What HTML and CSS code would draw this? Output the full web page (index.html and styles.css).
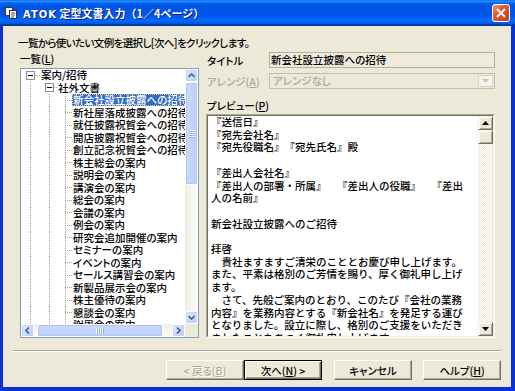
FILE: index.html
```html
<!DOCTYPE html>
<html lang="ja">
<head>
  <meta charset="UTF-8">
  <title>ATOK 定型文書入力</title>
  <link rel="stylesheet" href="styles.css">
</head>
<body>
  <div class="window">
    <div class="titlebar">
      <svg class="app-icon" width="12" height="12" viewBox="0 0 12 12">
        <rect x="0.5" y="0.5" width="7" height="8" fill="#fff" stroke="#333"/>
        <rect x="4.5" y="3.5" width="7" height="8" fill="#fff" stroke="#333"/>
        <path d="M6 6h4M6 8h4M6 10h3" stroke="#555" stroke-width="1"/>
      </svg>
      <span class="caption"><span class="latin">ATOK</span> 定型文書入力（1／4ページ）</span>
      <span class="close-btn">
        <svg width="10" height="10" viewBox="0 0 10 10"><path d="M1 1L9 9M9 1L1 9" stroke="#fff" stroke-width="2"/></svg>
      </span>
    </div>

    <div class="client">
      <p class="intro">一覧から使いたい文例を選択し[次へ]をクリックします。</p>

      <div class="main">
        <!-- left: template tree -->
        <div class="list-col">
          <div class="label list-label">一覧(<u>L</u>)</div>
          <div class="tree">
            <div class="tree-body">
              <div class="node node-root"><span class="exp"></span><span class="dash"></span><span class="name">案内/招待</span></div>
              <div class="node node-group"><span class="exp"></span><span class="dash short"></span><span class="name">社外文書</span></div>
              <div class="node leaf"><span class="tick"></span><span class="name selected">新会社設立披露への招待</span></div>
              <div class="node leaf"><span class="tick"></span><span class="name">新社屋落成披露への招待</span></div>
              <div class="node leaf"><span class="tick"></span><span class="name">就任披露祝賀会への招待</span></div>
              <div class="node leaf"><span class="tick"></span><span class="name">開店披露祝賀会への招待</span></div>
              <div class="node leaf"><span class="tick"></span><span class="name">創立記念祝賀会への招待</span></div>
              <div class="node leaf"><span class="tick"></span><span class="name">株主総会の案内</span></div>
              <div class="node leaf"><span class="tick"></span><span class="name">説明会の案内</span></div>
              <div class="node leaf"><span class="tick"></span><span class="name">講演会の案内</span></div>
              <div class="node leaf"><span class="tick"></span><span class="name">総会の案内</span></div>
              <div class="node leaf"><span class="tick"></span><span class="name">会議の案内</span></div>
              <div class="node leaf"><span class="tick"></span><span class="name">例会の案内</span></div>
              <div class="node leaf"><span class="tick"></span><span class="name">研究会追加開催の案内</span></div>
              <div class="node leaf"><span class="tick"></span><span class="name">セミナーの案内</span></div>
              <div class="node leaf"><span class="tick"></span><span class="name">イベントの案内</span></div>
              <div class="node leaf"><span class="tick"></span><span class="name">セールス講習会の案内</span></div>
              <div class="node leaf"><span class="tick"></span><span class="name">新製品展示会の案内</span></div>
              <div class="node leaf"><span class="tick"></span><span class="name">株主優待の案内</span></div>
              <div class="node leaf"><span class="tick"></span><span class="name">懇談会の案内</span></div>
              <div class="node leaf"><span class="tick"></span><span class="name">謝恩会の案内</span></div>
            </div>

            <div class="vscroll">
              <span class="sb-btn"><svg width="7" height="5" viewBox="0 0 7 5"><path d="M0.5 4L3.5 1L6.5 4" fill="none" stroke="#4D6185" stroke-width="1.6"/></svg></span>
              <span class="sb-thumb v-thumb">
                <svg width="6" height="8" viewBox="0 0 6 8"><path d="M0 0.5h6M0 2.5h6M0 4.5h6M0 6.5h6" stroke="#fff"/><path d="M0 1.5h6M0 3.5h6M0 5.5h6M0 7.5h6" stroke="#8CB0F8"/></svg>
              </span>
              <span class="sb-space"></span>
              <span class="sb-btn"><svg width="7" height="5" viewBox="0 0 7 5"><path d="M0.5 1L3.5 4L6.5 1" fill="none" stroke="#4D6185" stroke-width="1.6"/></svg></span>
            </div>
            <div class="hscroll">
              <span class="sb-btn"><svg width="5" height="7" viewBox="0 0 5 7"><path d="M4 0.5L1 3.5L4 6.5" fill="none" stroke="#4D6185" stroke-width="1.6"/></svg></span>
              <span class="sb-thumb h-thumb">
                <svg width="8" height="6" viewBox="0 0 8 6"><path d="M0.5 0v6M2.5 0v6M4.5 0v6M6.5 0v6" stroke="#fff"/><path d="M1.5 0v6M3.5 0v6M5.5 0v6M7.5 0v6" stroke="#8CB0F8"/></svg>
              </span>
              <span class="sb-space"></span>
              <span class="sb-btn"><svg width="5" height="7" viewBox="0 0 5 7"><path d="M1 0.5L4 3.5L1 6.5" fill="none" stroke="#4D6185" stroke-width="1.6"/></svg></span>
            </div>
            <div class="corner"></div>
          </div>
        </div>

        <!-- right: title, arrange, preview -->
        <div class="detail-col">
          <div class="field-row">
            <span class="label">タイトル</span>
            <div class="field">新会社設立披露への招待</div>
          </div>
          <div class="field-row combo-row">
            <span class="label disabled">アレンジ(<u>A</u>)</span>
            <div class="combo">
              <span class="combo-text">アレンジなし</span>
              <span class="combo-btn"><svg width="7" height="4" viewBox="0 0 7 4"><path d="M0 0h7L3.5 4z" fill="#C9C7BA"/></svg></span>
            </div>
          </div>
          <div class="label preview-label">プレビュー(<u>P</u>)</div>
          <div class="preview">
            <div class="preview-inner">
              <div class="preview-text">『送信日』
『宛先会社名』
『宛先役職名』　『宛先氏名』殿

『差出人会社名』
『差出人の部署・所属』　　『差出人の役職』　　『差出
人の名前』

新会社設立披露へのご招待

拝啓
　貴社ますますご清栄のこととお慶び申し上げます。
また、平素は格別のご芳情を賜り、厚く御礼申し上げ
ます。
　さて、先般ご案内のとおり、このたび『会社の業務
内容』を業務内容とする『新会社名』を発足する運び
となりました。設立に際し、格別のご支援をいただき
ましたことをあつく御礼申し上げます。</div>
              <div class="cscroll">
                <span class="c-btn"><svg width="7" height="4" viewBox="0 0 7 4"><path d="M3.5 0L7 4H0z" fill="#000"/></svg></span>
                <span class="c-btn c-thumb"></span>
                <span class="c-track"></span>
                <span class="c-btn"><svg width="7" height="4" viewBox="0 0 7 4"><path d="M0 0h7L3.5 4z" fill="#000"/></svg></span>
              </div>
            </div>
          </div>
        </div>
      </div>

      <div class="separator"></div>

      <div class="buttons">
        <button class="btn btn-back" disabled>&lt; 戻る(<u>B</u>)</button>
        <button class="btn btn-next">次へ(<u>N</u>) &gt;</button>
        <button class="btn btn-cancel">キャンセル</button>
        <button class="btn btn-help">ヘルプ(<u>H</u>)</button>
      </div>
    </div>
  </div>
</body>
</html>
```

FILE: styles.css
```css
* {
  box-sizing: border-box;
}
html, body {
  margin: 0;
  background: #fff;
}
body {
  width: 515px;
  height: 391px;
  overflow: hidden;
  font-family: "Noto Sans CJK JP", sans-serif;
  font-size: 10.5px;
  font-weight: 500;
  color: #000;
  font-feature-settings: "palt";
}
u {
  text-underline-offset: 1px;
}

/* window frame */
.window {
  width: 515px;
  height: 391px;
  display: flex;
  flex-direction: column;
  background: #0831D9;
}
.titlebar {
  height: 26px;
  flex: none;
  display: flex;
  align-items: center;
  padding-left: 5px;
  background: linear-gradient(to bottom, #0058EE 0%, #3593FF 4%, #288EFF 6%, #127DFF 8%, #036FFC 10%, #0262EE 14%, #0057E5 20%, #0054E3 24%, #0055EB 56%, #005BF5 66%, #026AFE 76%, #0062EF 86%, #0052D6 92%, #0040AB 94%, #003092 100%);
}
.app-icon {
  flex: none;
  margin-right: 6px;
}
.caption {
  color: #fff;
  font-weight: bold;
  font-size: 11px;
  font-feature-settings: normal;
  text-shadow: 1px 1px #0A1883;
  white-space: nowrap;
}
.caption .latin {
  font-family: "DejaVu Sans", sans-serif;
  font-size: 10px;
  letter-spacing: 1px;
}
.close-btn {
  margin-left: auto;
  margin-right: 5px;
  width: 18px;
  height: 18px;
  border: 1px solid #fff;
  border-radius: 3px;
  background: linear-gradient(135deg, #F0957A 0%, #E2603A 35%, #D44A22 70%, #C13B14 100%);
  display: flex;
  align-items: center;
  justify-content: center;
}

.client {
  flex: 1;
  margin: 0 4px 4px 3px;
  background: #ECE9D8;
  padding: 10px 10px 0 10px;
}
.intro {
  margin: 0 0 3px 5px;
  line-height: 13px;
  letter-spacing: -0.6px;
  white-space: nowrap;
}

.main {
  margin: 0 6px;
  display: grid;
  grid-template-columns: 180px 1fr;
  column-gap: 7px;
  height: 286px;
}

.label {
  line-height: 13px;
  white-space: nowrap;
}
.label.disabled {
  color: #ACA899;
}
.list-label {
  margin: 0 0 3px 1px;
}

/* tree view */
.tree {
  margin-left: 1px;
  height: 270px;
  border: 1px solid #7F9DB9;
  background: #fff;
  display: grid;
  grid-template-columns: 1fr 13px;
  grid-template-rows: 1fr 13px;
}
.tree-body {
  overflow: hidden;
  white-space: nowrap;
}
.node {
  display: flex;
  align-items: center;
  height: 12.5px;
}
.node-root {
  padding-left: 5px;
}
.node-group {
  padding-left: 24px;
  background: linear-gradient(#A0A0A0 50%, transparent 0) 9px 0 / 1px 2px repeat-y;
}
.leaf {
  padding-left: 44px;
  background:
    linear-gradient(#A0A0A0 50%, transparent 0) 9px 0 / 1px 2px repeat-y,
    linear-gradient(#A0A0A0 50%, transparent 0) 28px 0 / 1px 2px repeat-y,
    linear-gradient(#A0A0A0 50%, transparent 0) 44px 0 / 1px 2px repeat-y;
}
.exp {
  flex: none;
  width: 9px;
  height: 9px;
  border: 1px solid #8E8F8F;
  background: linear-gradient(#000, #000) center / 5px 1px no-repeat, #fff;
}
.dash {
  flex: none;
  width: 5px;
  border-top: 1px dotted #A0A0A0;
}
.dash.short {
  width: 3px;
}
.tick {
  flex: none;
  width: 7px;
  border-top: 1px dotted #A0A0A0;
}
.name {
  padding: 0 1px;
  height: 12px;
  line-height: 12px;
}
.name.selected {
  background: #316AC5;
  color: #fff;
  outline: 1px dotted #E8C48A;
  outline-offset: -1px;
}

/* XP themed scrollbars of the tree */
.vscroll {
  display: flex;
  flex-direction: column;
  background: linear-gradient(to right, #EEEDE5, #FDFDFA);
}
.hscroll {
  display: flex;
  background: linear-gradient(to bottom, #EEEDE5, #FDFDFA);
}
.sb-btn {
  flex: none;
  width: 13px;
  height: 13px;
  border: 1px solid #fff;
  border-radius: 2px;
  background: linear-gradient(135deg, #E3EBFE, #B7CBF7);
  box-shadow: inset 0 0 0 1px #C3D3FD;
  display: flex;
  align-items: center;
  justify-content: center;
}
.sb-thumb {
  flex: none;
  border: 1px solid #fff;
  border-radius: 2px;
  box-shadow: inset 0 0 0 1px #B2C7F6;
  display: flex;
  align-items: center;
  justify-content: center;
}
.v-thumb {
  height: 103px;
  background: linear-gradient(to right, #CBD9FD, #BBD0FB);
}
.h-thumb {
  width: 126px;
  margin-left: 3px;
  background: linear-gradient(to bottom, #CBD9FD, #BBD0FB);
}
.sb-space {
  flex: 1;
}
.corner {
  background: #ECE9D8;
}

/* right column */
.field-row {
  display: grid;
  grid-template-columns: 63px 1fr;
  align-items: center;
  height: 16px;
}
.field-row .label {
  padding-left: 1px;
}
.combo-row {
  margin-top: 5px;
}
.field {
  height: 16px;
  border: 1px solid #B3B0A1;
  background: #EEEBDD;
  line-height: 14px;
  padding-left: 1px;
  white-space: nowrap;
}
.combo {
  height: 16px;
  border: 1px solid #C2BFB1;
  background: #ECE9D8;
  display: flex;
  align-items: center;
}
.combo-text {
  flex: 1;
  padding-left: 3px;
  color: #ACA899;
  line-height: 14px;
}
.combo-btn {
  width: 15px;
  height: 12px;
  margin-right: 1px;
  border: 1px solid #D6D3C6;
  background: #F4F3EE;
  display: flex;
  align-items: center;
  justify-content: center;
}
.preview-label {
  margin: 10px 0 2px 1px;
}

/* classic sunken preview box */
.preview {
  height: 224px;
  border: 1px solid;
  border-color: #ACA899 #fff #fff #ACA899;
}
.preview-inner {
  height: 100%;
  border: 1px solid;
  border-color: #716F64 #F1EFE2 #F1EFE2 #716F64;
  background: #fff;
  display: grid;
  grid-template-columns: 1fr 15px;
}
.preview-text {
  overflow: hidden;
  white-space: pre;
  padding-left: 3px;
  line-height: 12.7px;
  font-feature-settings: normal;
}
.cscroll {
  display: flex;
  flex-direction: column;
}
.c-btn {
  flex: none;
  height: 14px;
  background: #ECE9D8;
  border: 1px solid;
  border-color: #F1EFE2 #716F64 #716F64 #F1EFE2;
  box-shadow: inset 1px 1px #fff, inset -1px -1px #ACA899;
  display: flex;
  align-items: center;
  justify-content: center;
}
.c-track {
  flex: 1;
  background-image: repeating-conic-gradient(#ECE9D8 0% 25%, #fff 0% 50%);
  background-size: 2px 2px;
}

/* bottom */
.separator {
  margin-top: 12px;
  height: 2px;
  border-top: 1px solid #ACA899;
  border-bottom: 1px solid #fff;
}
.buttons {
  display: flex;
  justify-content: flex-end;
  margin-top: 8px;
}
.btn {
  width: 78px;
  height: 20px;
  padding: 0;
  font-family: "Noto Sans CJK JP", sans-serif;
  font-size: 10.5px;
  font-weight: 500;
  font-feature-settings: "palt";
  color: #000;
  background: #ECE9D8;
  border: 1px solid;
  border-color: #fff #716F64 #716F64 #fff;
  box-shadow: inset -1px -1px #ACA899;
}
.btn-back {
  color: #ACA899;
  text-shadow: 1px 1px #fff;
}
.btn-next {
  border: 1px solid #000;
  box-shadow: inset 1px 1px #fff, inset -1px -1px #716F64, inset -2px -2px #ACA899;
}
.btn-cancel {
  margin-left: 12px;
}
.btn-help {
  margin-left: 11px;
}
```
